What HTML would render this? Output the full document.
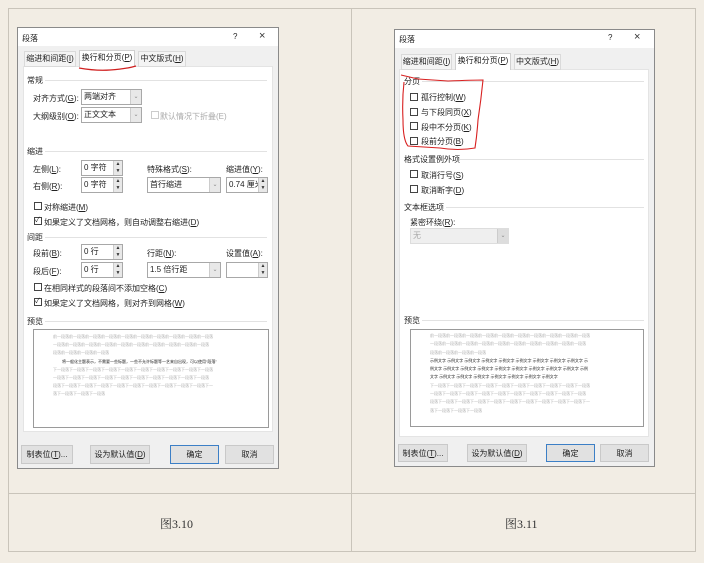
<!DOCTYPE html>
<html><head><meta charset="utf-8"><style>
*{margin:0;padding:0;box-sizing:border-box}
body{width:704px;height:563px;background:#f2ede4;position:relative;overflow:hidden;font-family:"Liberation Sans","Microsoft YaHei","Noto Sans CJK SC",sans-serif;font-size:8px;color:#222}
.a{position:absolute;white-space:nowrap}
.ln{position:absolute;background:#c9c4ba}
.dlg{position:absolute;background:#f0f0f0;border:1px solid #8a8a8a}
.wh{position:absolute;background:#fff}
.tab{position:absolute;border:1px solid #d0d0d0;background:#fff;text-align:center;line-height:14px}
.tab.off{background:#f4f4f4;border-color:#dadada}
.inp{position:absolute;border:1px solid #a8a8a8;background:#fff;padding-left:2px;line-height:14px}
.dd{position:absolute;right:0;top:0;bottom:0;width:11px;background:#e8e8e8;border-left:1px solid #ccc;color:#888;text-align:center;font-size:6px;line-height:14px}
.sp{position:absolute;right:0;top:0;bottom:0;width:9px;background:#e8e8e8;border-left:1px solid #ccc;font-size:5px;line-height:7px;text-align:center;color:#333}
.cb{position:absolute;width:8px;height:8px;border:1px solid #444;background:#fff}
.sec{position:absolute;height:1px;background:#e2e2e2}
.btn{position:absolute;background:#e1e1e1;border:1px solid #c9c9c9;text-align:center;line-height:17px}
.pv{position:absolute;border:1px solid #9a9a9a;background:#fff}
.pl{position:absolute;font-size:4px;color:#b0b0b0;white-space:nowrap}
.pd{position:absolute;font-size:4px;color:#222;white-space:nowrap}
.cap{position:absolute;font-family:"Liberation Serif","Noto Serif CJK SC",serif;font-size:12px;color:#333}
</style></head><body>
<div class="ln" style="left:8px;top:8px;width:688px;height:1px"></div>
<div class="ln" style="left:8px;top:8px;width:1px;height:544px"></div>
<div class="ln" style="left:695px;top:8px;width:1px;height:544px"></div>
<div class="ln" style="left:351px;top:8px;width:1px;height:544px"></div>
<div class="ln" style="left:8px;top:493px;width:688px;height:1px"></div>
<div class="ln" style="left:8px;top:551px;width:688px;height:1px"></div>
<div class="cap" style="left:160px;top:515px">图3.10</div>
<div class="cap" style="left:505px;top:515px">图3.11</div>

<div class="dlg" style="left:17px;top:27px;width:262px;height:442px"></div>
<div class="wh" style="left:18px;top:28px;width:260px;height:18px"></div>
<div class="a" style="left:22px;top:33px">段落</div>
<div class="a" style="left:233px;top:32px;font-size:8px">?</div>
<div class="a" style="left:259px;top:30px;font-size:11px;color:#333">×</div>
<div class="wh" style="left:23px;top:66px;width:250px;height:366px;border:1px solid #e4e4e4"></div>
<div class="tab off" style="left:24px;top:51px;width:52px;height:16px">缩进和间距(<u>I</u>)</div>
<div class="tab" style="left:79px;top:50px;width:56px;height:17px;border-bottom:none">换行和分页(<u>P</u>)</div>
<div class="tab off" style="left:138px;top:51px;width:48px;height:16px">中文版式(<u>H</u>)</div>
<svg class="a" style="left:76px;top:64px" width="64" height="10"><path d="M3 4 Q20 7 34 6 Q50 5 60 2" stroke="#d02020" stroke-width="1.2" fill="none"/></svg>
<div class="a" style="left:27px;top:75px">常规</div><div class="sec" style="left:45px;top:80px;width:222px"></div>
<div class="a" style="left:33px;top:93px">对齐方式(<u>G</u>):</div>
<div class="inp" style="left:81px;top:89px;width:61px;height:16px">两端对齐<div class="dd">⌄</div></div>
<div class="a" style="left:33px;top:111px">大纲级别(<u>O</u>):</div>
<div class="inp" style="left:81px;top:107px;width:61px;height:16px">正文文本<div class="dd">⌄</div></div>
<div class="cb" style="left:151px;top:111px;border-color:#ccc"></div>
<div class="a" style="left:160px;top:111px;color:#aaa">默认情况下折叠(E)</div>
<div class="a" style="left:27px;top:146px">缩进</div><div class="sec" style="left:45px;top:151px;width:222px"></div>
<div class="a" style="left:33px;top:164px">左侧(<u>L</u>):</div>
<div class="inp" style="left:81px;top:160px;width:42px;height:16px">0 字符<div class="sp">▲<br>▼</div></div>
<div class="a" style="left:147px;top:164px">特殊格式(<u>S</u>):</div>
<div class="a" style="left:226px;top:164px">缩进值(<u>Y</u>):</div>
<div class="a" style="left:33px;top:181px">右侧(<u>R</u>):</div>
<div class="inp" style="left:81px;top:177px;width:42px;height:16px">0 字符<div class="sp">▲<br>▼</div></div>
<div class="inp" style="left:147px;top:177px;width:74px;height:16px">首行缩进<div class="dd">⌄</div></div>
<div class="inp" style="left:226px;top:177px;width:42px;height:16px">0.74 厘米<div class="sp">▲<br>▼</div></div>
<div class="cb" style="left:34px;top:202px"></div><div class="a" style="left:44px;top:202px">对称缩进(<u>M</u>)</div>
<div class="cb" style="left:34px;top:217px;font-size:7px;line-height:6px">✓</div><div class="a" style="left:44px;top:217px">如果定义了文档网格，则自动调整右缩进(<u>D</u>)</div>
<div class="a" style="left:27px;top:232px">间距</div><div class="sec" style="left:45px;top:237px;width:222px"></div>
<div class="a" style="left:33px;top:248px">段前(<u>B</u>):</div>
<div class="inp" style="left:81px;top:244px;width:42px;height:16px">0 行<div class="sp">▲<br>▼</div></div>
<div class="a" style="left:147px;top:248px">行距(<u>N</u>):</div>
<div class="a" style="left:226px;top:248px">设置值(<u>A</u>):</div>
<div class="a" style="left:33px;top:266px">段后(<u>F</u>):</div>
<div class="inp" style="left:81px;top:262px;width:42px;height:16px">0 行<div class="sp">▲<br>▼</div></div>
<div class="inp" style="left:147px;top:262px;width:74px;height:16px">1.5 倍行距<div class="dd">⌄</div></div>
<div class="inp" style="left:226px;top:262px;width:42px;height:16px"><div class="sp">▲<br>▼</div></div>
<div class="cb" style="left:34px;top:283px"></div><div class="a" style="left:44px;top:283px">在相同样式的段落间不添加空格(<u>C</u>)</div>
<div class="cb" style="left:34px;top:298px;font-size:7px;line-height:6px">✓</div><div class="a" style="left:44px;top:298px">如果定义了文档网格，则对齐到网格(<u>W</u>)</div>
<div class="a" style="left:27px;top:316px">预览</div><div class="sec" style="left:45px;top:321px;width:222px"></div>
<div class="pv" style="left:33px;top:329px;width:236px;height:99px"></div>
<div class="pl" style="left:53px;top:334px">前一段落前一段落前一段落前一段落前一段落前一段落前一段落前一段落前一段落前一段落</div>
<div class="pl" style="left:53px;top:342px">一段落前一段落前一段落前一段落前一段落前一段落前一段落前一段落前一段落前一段落</div>
<div class="pl" style="left:53px;top:350px">段落前一段落前一段落前一段落</div>
<div class="pd" style="left:62px;top:359px">将一般化主题表示，不需要一些标题，一些不允许标题等一艺来自出现，可以使用“段落”</div>
<div class="pl" style="left:53px;top:367px">下一段落下一段落下一段落下一段落下一段落下一段落下一段落下一段落下一段落下一段落</div>
<div class="pl" style="left:53px;top:375px">一段落下一段落下一段落下一段落下一段落下一段落下一段落下一段落下一段落下一段落</div>
<div class="pl" style="left:53px;top:383px">段落下一段落下一段落下一段落下一段落下一段落下一段落下一段落下一段落下一段落下一</div>
<div class="pl" style="left:53px;top:391px">落下一段落下一段落下一段落</div>
<div class="btn" style="left:21px;top:445px;width:52px;height:19px">制表位(<u>T</u>)...</div>
<div class="btn" style="left:90px;top:445px;width:60px;height:19px">设为默认值(<u>D</u>)</div>
<div class="btn" style="left:170px;top:445px;width:49px;height:19px;border:1px solid #3c7fc6">确定</div>
<div class="btn" style="left:225px;top:445px;width:49px;height:19px">取消</div>

<div class="dlg" style="left:394px;top:29px;width:261px;height:438px"></div>
<div class="wh" style="left:395px;top:30px;width:259px;height:18px"></div>
<div class="a" style="left:399px;top:34px">段落</div>
<div class="a" style="left:608px;top:33px;font-size:8px">?</div>
<div class="a" style="left:634px;top:31px;font-size:11px;color:#333">×</div>
<div class="wh" style="left:399px;top:69px;width:250px;height:368px;border:1px solid #e4e4e4"></div>
<div class="tab off" style="left:401px;top:54px;width:51px;height:16px">缩进和间距(<u>I</u>)</div>
<div class="tab" style="left:455px;top:53px;width:56px;height:17px;border-bottom:none">换行和分页(<u>P</u>)</div>
<div class="tab off" style="left:514px;top:54px;width:47px;height:16px">中文版式(<u>H</u>)</div>
<div class="a" style="left:404px;top:76px">分页</div><div class="sec" style="left:422px;top:81px;width:222px"></div>
<div class="cb" style="left:410px;top:93px"></div><div class="a" style="left:421px;top:92px">孤行控制(<u>W</u>)</div>
<div class="cb" style="left:410px;top:108px"></div><div class="a" style="left:421px;top:107px">与下段同页(<u>X</u>)</div>
<div class="cb" style="left:410px;top:122px"></div><div class="a" style="left:421px;top:122px">段中不分页(<u>K</u>)</div>
<div class="cb" style="left:410px;top:137px"></div><div class="a" style="left:421px;top:136px">段前分页(<u>B</u>)</div>
<svg class="a" style="left:398px;top:70px" width="92" height="84"><path d="M3 5 L20 9 L50 11 Q75 10 85 10 Q83 30 80 50 Q79 65 77 78 Q60 81 42 78 L10 76 Q5 70 5 50 Q4 30 6 12" stroke="#d82020" stroke-width="1.1" fill="none"/></svg>
<div class="a" style="left:404px;top:154px">格式设置例外项</div><div class="sec" style="left:460px;top:159px;width:184px"></div>
<div class="cb" style="left:410px;top:170px"></div><div class="a" style="left:421px;top:170px">取消行号(<u>S</u>)</div>
<div class="cb" style="left:410px;top:185px"></div><div class="a" style="left:421px;top:185px">取消断字(<u>D</u>)</div>
<div class="a" style="left:404px;top:202px">文本框选项</div><div class="sec" style="left:446px;top:207px;width:198px"></div>
<div class="a" style="left:410px;top:217px">紧密环绕(<u>R</u>):</div>
<div class="inp" style="left:410px;top:228px;width:99px;height:16px;background:#efefef;border-color:#ddd;color:#aaa">无<div class="dd" style="background:#ddd">⌄</div></div>
<div class="a" style="left:404px;top:315px">预览</div><div class="sec" style="left:422px;top:320px;width:222px"></div>
<div class="pv" style="left:410px;top:329px;width:234px;height:98px"></div>
<div class="pl" style="left:430px;top:333px">前一段落前一段落前一段落前一段落前一段落前一段落前一段落前一段落前一段落前一段落</div>
<div class="pl" style="left:430px;top:341px">一段落前一段落前一段落前一段落前一段落前一段落前一段落前一段落前一段落前一段落</div>
<div class="pl" style="left:430px;top:350px">段落前一段落前一段落前一段落</div>
<div class="pd" style="left:430px;top:358px">示例文字 示例文字 示例文字 示例文字 示例文字 示例文字 示例文字 示例文字 示例文字 示</div>
<div class="pd" style="left:430px;top:366px">例文字 示例文字 示例文字 示例文字 示例文字 示例文字 示例文字 示例文字 示例文字 示例</div>
<div class="pd" style="left:430px;top:374px">文字 示例文字 示例文字 示例文字 示例文字 示例文字 示例文字 示例文字</div>
<div class="pl" style="left:430px;top:383px">下一段落下一段落下一段落下一段落下一段落下一段落下一段落下一段落下一段落下一段落</div>
<div class="pl" style="left:430px;top:391px">一段落下一段落下一段落下一段落下一段落下一段落下一段落下一段落下一段落下一段落</div>
<div class="pl" style="left:430px;top:399px">段落下一段落下一段落下一段落下一段落下一段落下一段落下一段落下一段落下一段落下一</div>
<div class="pl" style="left:430px;top:408px">落下一段落下一段落下一段落</div>
<div class="btn" style="left:398px;top:444px;width:50px;height:18px">制表位(<u>T</u>)...</div>
<div class="btn" style="left:467px;top:444px;width:60px;height:18px">设为默认值(<u>D</u>)</div>
<div class="btn" style="left:546px;top:444px;width:49px;height:18px;border:1px solid #3c7fc6">确定</div>
<div class="btn" style="left:600px;top:444px;width:49px;height:18px">取消</div>
</body></html>
